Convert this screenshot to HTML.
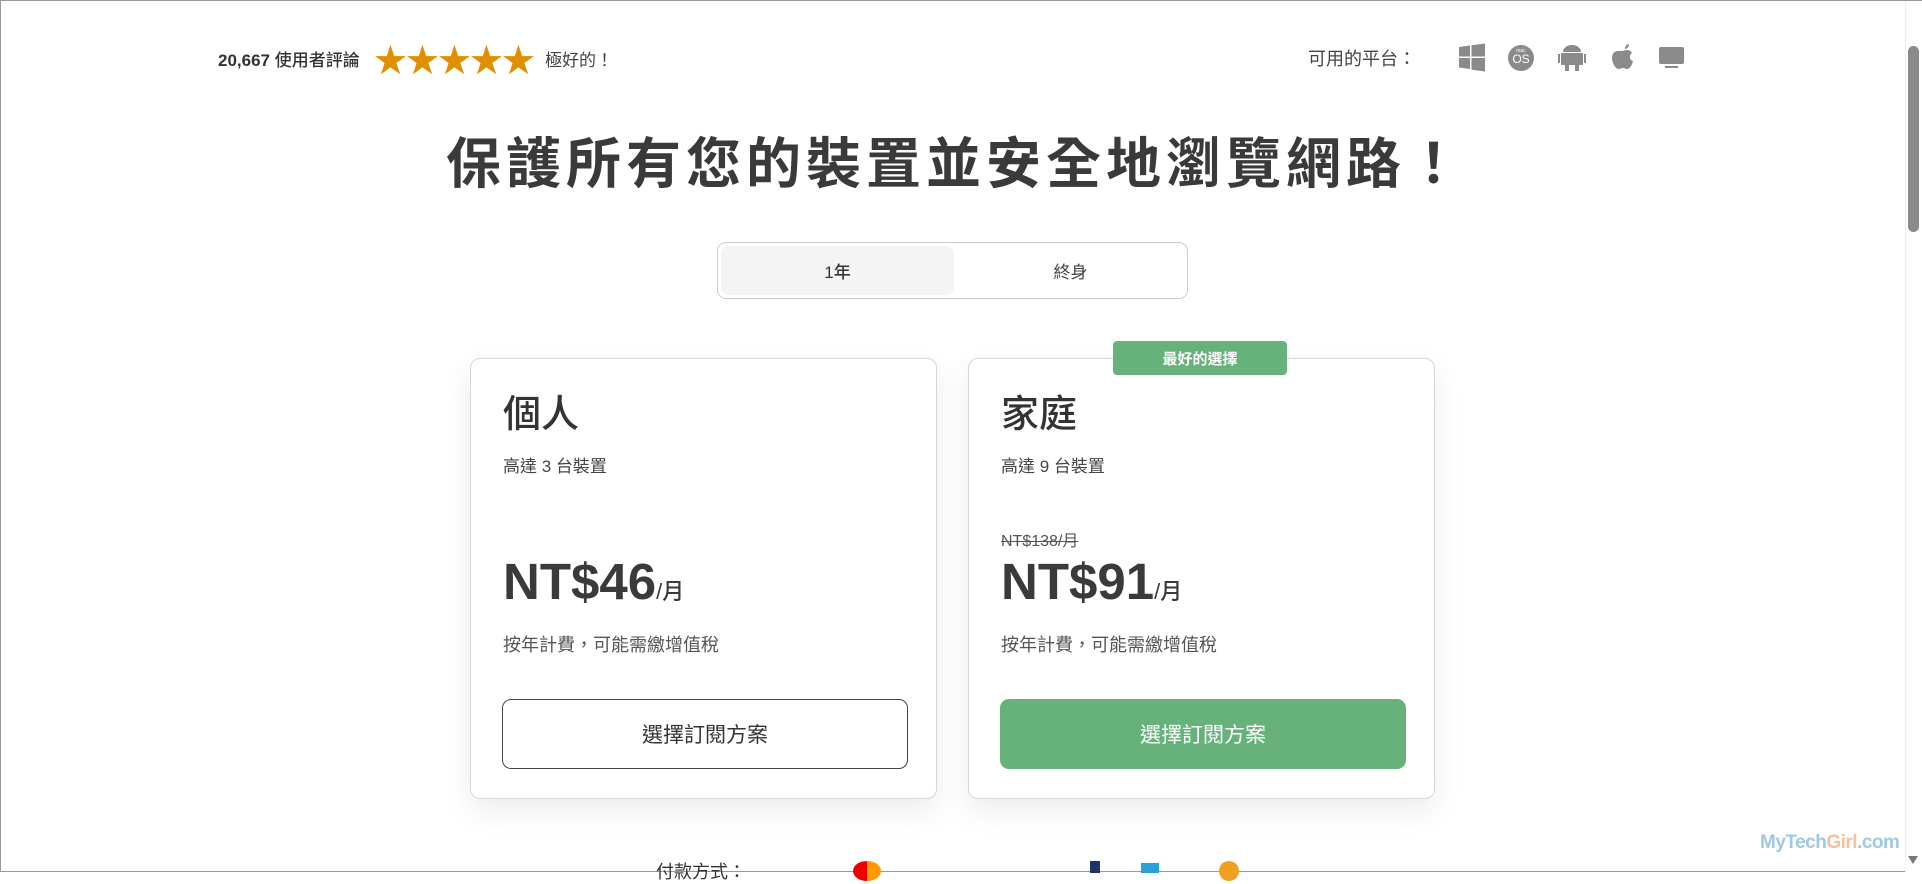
<!DOCTYPE html>
<html><head><meta charset="utf-8"><style>
*{box-sizing:border-box;margin:0;padding:0}
body{width:1922px;height:872px;overflow:hidden;background:#fff;font-family:"Liberation Sans","Noto Sans CJK TC",sans-serif;color:#333;position:relative;border:1px solid #999}
.a{position:absolute}
.card{position:absolute;top:357px;width:467px;height:441px;border:1px solid #d6d6d6;border-radius:10px;background:#fff;box-shadow:0 12px 30px rgba(0,0,0,.08)}
.card h2{position:absolute;left:32px;top:24px;font-size:38px;font-weight:500;color:#333}
.card .sub{position:absolute;left:32px;top:93px;font-size:17px;color:#444}
.card .price{position:absolute;left:32px;top:193px;font-size:51px;font-weight:bold;color:#3a3a3a}
.card .price small{font-size:22px;font-weight:500}
.card .tax{position:absolute;left:32px;top:272px;font-size:18px;color:#555}
.btn{position:absolute;left:31px;top:340px;width:406px;height:70px;border-radius:9px;font-size:21px;display:flex;align-items:center;justify-content:center}
</style></head><body>
<div class="a" style="left:217px;top:45px;font-size:17px;font-weight:bold;color:#333">20,667 <span style="font-weight:500">使用者評論</span></div>
<div class="a" style="left:373px;top:33px;font-size:33px;color:#e08f00;letter-spacing:-1px">★★★★★</div>
<div class="a" style="left:544px;top:45px;font-size:17px;color:#444">極好的！</div>
<div class="a" style="left:1307px;top:44px;font-size:18px;color:#444">可用的平台：</div>
<svg class="a" style="left:1458px;top:42px" width="240" height="30" viewBox="0 0 240 30" fill="#8a8a8a">
<path d="M0 4l11-1.5v11H0zM12.5 2.3L26 0.5v13H12.5zM0 15h11v11L0 24.5zM12.5 15H26v13.5L12.5 26.7z"/>
<circle cx="62" cy="15" r="13"/><text x="62" y="20" font-size="12" fill="#fff" text-anchor="middle" font-family="Liberation Sans">OS</text><text x="62" y="9" font-size="5" fill="#fff" text-anchor="middle" font-family="Liberation Sans">mac</text>
<path d="M102 10h22v12h-22zM104 9a9 7 0 0 1 18 0zM99 11h2v9h-2zM125 11h2v9h-2zM106 22h4v6h-4zM116 22h4v6h-4z"/>
<path d="M162 8c3 0 4-1 6-1 2 0 4 1 5 3-3 2-3 7 1 8-1 4-3 8-6 8-2 0-2-1-4-1s-3 1-4 1c-4 0-7-7-7-11 0-5 3-7 6-7 1 0 2 0 3 0zM166 6c0-3 2-5 4-5 0 3-2 5-4 5z"/>
<rect x="200" y="4" width="25" height="17" rx="2"/><rect x="206" y="23" width="13" height="2"/>
</svg>
<div class="a" style="left:0;width:1910px;top:118px;text-align:center;font-size:55px;font-weight:bold;color:#3a3a3a;letter-spacing:5px">保護所有您的裝置並安全地瀏覽網路！</div>
<div class="a" style="left:716px;top:241px;width:471px;height:57px;border:1px solid #ccc;border-radius:9px">
<div class="a" style="left:3px;top:3px;width:233px;height:49px;background:#f4f4f4;border-radius:8px;display:flex;align-items:center;justify-content:center;font-size:17px;font-weight:500">1年</div>
<div class="a" style="left:236px;top:3px;width:233px;height:49px;display:flex;align-items:center;justify-content:center;font-size:17px;color:#444">終身</div>
</div>
<div class="card" style="left:469px">
<h2>個人</h2><div class="sub">高達 3 台裝置</div>
<div class="price">NT$46<small>/月</small></div>
<div class="tax">按年計費，可能需繳增值稅</div>
<div class="btn" style="border:1px solid #444;color:#333">選擇訂閱方案</div>
</div>
<div class="card" style="left:967px">
<h2>家庭</h2><div class="sub">高達 9 台裝置</div>
<div class="a" style="left:32px;top:168px;font-size:16px;color:#555;text-decoration:line-through">NT$138/月</div>
<div class="price">NT$91<small>/月</small></div>
<div class="tax">按年計費，可能需繳增值稅</div>
<div class="btn" style="background:#66b27a;color:#fff">選擇訂閱方案</div>
</div>
<div class="a" style="left:1112px;top:340px;width:174px;height:34px;background:#66b27a;border-radius:4px;color:#fff;font-size:15px;font-weight:bold;display:flex;align-items:center;justify-content:center">最好的選擇</div>
<div class="a" style="left:655px;top:857px;font-size:18px;color:#333">付款方式：</div>
<div class="a" style="left:852px;top:860px;width:28px;height:20px;border-radius:50%;background:linear-gradient(90deg,#e00 50%,#f90 50%)"></div>
<div class="a" style="left:1218px;top:860px;width:20px;height:20px;border-radius:50%;background:#f0a020"></div>
<div class="a" style="left:1140px;top:862px;width:18px;height:10px;background:#2aa0d8"></div>
<div class="a" style="left:1089px;top:860px;width:10px;height:12px;background:#233264"></div>
<div class="a" style="left:1759px;top:831px;font-size:19px;font-weight:bold;color:#9fc8e4;letter-spacing:-0.5px">MyTech<span style="color:#f5c0a0">Girl</span>.com</div>
<div class="a" style="left:1904px;top:0;width:17px;height:872px;background:#fff;border-left:1px solid #eee"></div>
<div class="a" style="left:1907px;top:45px;width:11px;height:186px;background:#8a8a8a;border-radius:6px"></div>
<div class="a" style="left:1907px;top:855px;width:0;height:0;border-left:5px solid transparent;border-right:5px solid transparent;border-top:8px solid #777"></div>
</body></html>
